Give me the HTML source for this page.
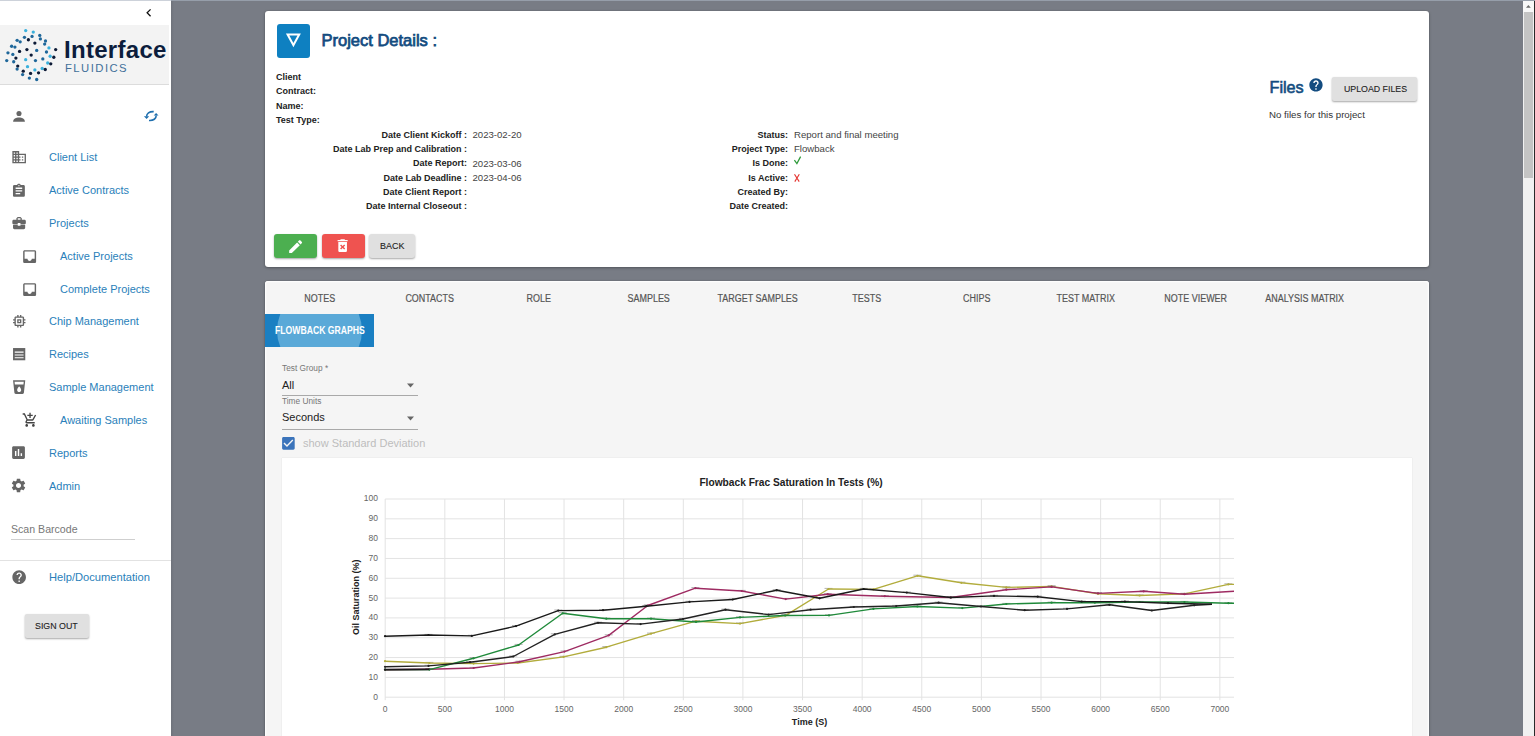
<!DOCTYPE html>
<html><head><meta charset="utf-8">
<style>
*{box-sizing:border-box;}
html,body{margin:0;padding:0;}
body{width:1535px;height:736px;overflow:hidden;position:relative;background:#787c85;font-family:"Liberation Sans",sans-serif;}
.a{position:absolute;white-space:nowrap;line-height:1;}
#side{position:absolute;left:0;top:0;width:171px;height:736px;background:#fff;}
.nav{position:absolute;font-size:11px;color:#2a7fba;line-height:1;white-space:nowrap;}
.ico{position:absolute;}
.card1{position:absolute;left:265px;top:10.8px;width:1164.2px;height:255.8px;background:#fff;border-radius:3px;box-shadow:0 1px 3px rgba(0,0,0,.3),0 0 1px rgba(0,0,0,.3);}
.card2{position:absolute;left:265px;top:281px;width:1164.2px;height:470px;background:#f5f5f5;border-radius:3px;box-shadow:inset 0 0 0 1.2px #fdfdfd,0 1px 3px rgba(0,0,0,.3),0 0 1px rgba(0,0,0,.3);}
.lbl{position:absolute;font-size:9px;font-weight:bold;color:#222;line-height:1;white-space:nowrap;}
.val{position:absolute;font-size:9.6px;color:#444;line-height:1;white-space:nowrap;}
.tab{position:absolute;font-size:10px;color:#555;-webkit-text-stroke:0.2px #555;line-height:1;white-space:nowrap;text-align:center;width:109.4px;transform:scaleX(0.895);}
</style></head><body>
<!-- top line -->
<div style="position:absolute;left:0;top:0;width:1535px;height:1px;background:#969eaa;z-index:5"></div>
<div style="position:absolute;left:0;top:0;width:171px;height:1px;background:#cdd2da;z-index:6"></div>

<div id="side">
  <!-- chevron -->
  <svg class="ico" style="left:140.8px;top:5.1px" width="15.6" height="15.6" viewBox="0 0 24 24"><path d="M15.41 7.41L14 6l-6 6 6 6 1.41-1.41L10.83 12z" fill="#111"/></svg>
  <!-- logo band -->
  <div style="position:absolute;left:0;top:25px;width:169px;height:60px;background:#f3f3f3;border-bottom:1px solid #dcdcdc"></div>
  <svg class="ico" style="left:0;top:25px" width="64" height="60"><circle cx="25.69" cy="5.58" r="1.65" fill="#3ab0dc"/><circle cx="33.27" cy="7.05" r="1.65" fill="#3ab0dc"/><circle cx="24.46" cy="12.31" r="1.65" fill="#1f679a"/><circle cx="32.05" cy="11.45" r="1.65" fill="#1f679a"/><circle cx="39.76" cy="10.47" r="1.65" fill="#1f679a"/><circle cx="40.37" cy="13.90" r="1.65" fill="#1f679a"/><circle cx="17.13" cy="15.37" r="1.65" fill="#1f679a"/><circle cx="20.18" cy="16.83" r="1.65" fill="#1f679a"/><circle cx="28.38" cy="14.76" r="1.65" fill="#0c1a36"/><circle cx="45.50" cy="15.98" r="1.65" fill="#1f679a"/><circle cx="44.65" cy="19.04" r="1.65" fill="#1f679a"/><circle cx="11.62" cy="21.24" r="1.65" fill="#1f679a"/><circle cx="14.92" cy="22.09" r="1.65" fill="#1f679a"/><circle cx="34.86" cy="18.06" r="1.65" fill="#0c1a36"/><circle cx="48.93" cy="22.95" r="1.65" fill="#3ab0dc"/><circle cx="55.66" cy="24.54" r="1.65" fill="#0c1a36"/><circle cx="26.91" cy="24.54" r="1.65" fill="#0c1a36"/><circle cx="19.57" cy="26.38" r="1.65" fill="#0c1a36"/><circle cx="36.70" cy="25.40" r="1.65" fill="#1f679a"/><circle cx="46.48" cy="26.99" r="1.65" fill="#1f679a"/><circle cx="7.95" cy="27.84" r="1.65" fill="#1f679a"/><circle cx="12.84" cy="29.43" r="1.65" fill="#1f679a"/><circle cx="31.19" cy="30.05" r="1.65" fill="#0c1a36"/><circle cx="50.15" cy="31.27" r="1.65" fill="#3ab0dc"/><circle cx="53.82" cy="32.25" r="1.65" fill="#0c1a36"/><circle cx="15.90" cy="33.10" r="1.65" fill="#0c1a36"/><circle cx="25.69" cy="34.69" r="1.65" fill="#3ab0dc"/><circle cx="35.47" cy="35.55" r="1.65" fill="#1f679a"/><circle cx="42.81" cy="33.96" r="1.65" fill="#1f679a"/><circle cx="6.73" cy="35.55" r="1.65" fill="#1f679a"/><circle cx="13.70" cy="36.77" r="1.65" fill="#1f679a"/><circle cx="47.71" cy="38.00" r="1.65" fill="#3ab0dc"/><circle cx="50.76" cy="38.85" r="1.65" fill="#0c1a36"/><circle cx="17.74" cy="41.06" r="1.65" fill="#0c1a36"/><circle cx="27.52" cy="41.67" r="1.65" fill="#3ab0dc"/><circle cx="17.13" cy="44.11" r="1.65" fill="#1f679a"/><circle cx="34.86" cy="44.97" r="1.65" fill="#3ab0dc"/><circle cx="42.20" cy="43.50" r="1.65" fill="#3ab0dc"/><circle cx="45.26" cy="44.48" r="1.65" fill="#0c1a36"/><circle cx="23.24" cy="46.19" r="1.65" fill="#0c1a36"/><circle cx="30.58" cy="48.39" r="1.65" fill="#0c1a36"/><circle cx="38.53" cy="47.78" r="1.65" fill="#0c1a36"/><circle cx="22.63" cy="49.62" r="1.65" fill="#1f679a"/><circle cx="29.36" cy="53.04" r="1.65" fill="#1f679a"/><circle cx="36.70" cy="54.51" r="1.65" fill="#1f679a"/></svg>
  <div class="a" style="left:64px;top:38.2px;font-size:24px;font-weight:bold;color:#0c1d3c;letter-spacing:0.3px">Interface</div>
  <div class="a" style="left:65px;top:63.1px;font-size:11.3px;color:#42709a;letter-spacing:1.45px">FLUIDICS</div>

  <!-- person -->
  <svg class="ico" style="left:12px;top:110px" width="14" height="13" viewBox="0 0 14 13"><circle cx="7" cy="3.5" r="2.55" fill="#666"/><path d="M1.1 11.7 C1.1 8.6 4.2 7.5 7 7.5 C9.8 7.5 12.9 8.6 12.9 11.7Z" fill="#666"/></svg>
  <!-- sync -->
  <svg class="ico" style="left:138px;top:104px" width="26" height="24" viewBox="0 0 26 24"><path d="M15.7 7.6 C11.2 7.4 8.6 9.4 8.6 12.6" stroke="#1f6fae" stroke-width="1.6" fill="none"/><path d="M5.9 12.2 L11.2 12.2 L8.6 14.9Z" fill="#1f6fae"/><path d="M11 16.5 C15.6 16.8 18.2 14.6 18.2 11.4" stroke="#1f6fae" stroke-width="1.6" fill="none"/><path d="M15.7 11.6 L20.5 11.6 L18.1 9Z" fill="#1f6fae"/></svg>

  <div class="nav" style="left:49px;top:152.19px">Client List</div>
<svg class="ico" style="left:10.74px;top:149.06px" width="16.32" height="16.32" viewBox="0 0 24 24"><path d="M12 7V3H2v18h20V7H12zM6 19H4v-2h2v2zm0-4H4v-2h2v2zm0-4H4V9h2v2zm0-4H4V5h2v2zm4 12H8v-2h2v2zm0-4H8v-2h2v2zm0-4H8V9h2v2zm0-4H8V5h2v2zm10 12h-8v-2h2v-2h-2v-2h2v-2h-2V9h8v10zm-2-8h-2v2h2v-2zm0 4h-2v2h2v-2z" fill="#666"/></svg>
<div class="nav" style="left:49px;top:185.04px">Active Contracts</div>
<svg class="ico" style="left:11.0px;top:182.80px" width="15.84" height="15.84" viewBox="0 0 24 24"><path d="M19 3h-4.18C14.4 1.84 13.3 1 12 1c-1.3 0-2.4.84-2.82 2H5c-1.1 0-2 .9-2 2v14c0 1.1.9 2 2 2h14c1.1 0 2-.9 2-2V5c0-1.1-.9-2-2-2zm-7 0c.55 0 1 .45 1 1s-.45 1-1 1-1-.45-1-1 .45-1 1-1zm2 14H7v-2h7v2zm3-4H7v-2h10v2zm0-4H7V7h10v2z" fill="#666"/></svg>
<div class="nav" style="left:49px;top:217.89px">Projects</div>
<svg class="ico" style="left:10.95px;top:215.20px" width="16.20" height="16.20" viewBox="0 0 24 24"><path d="M10 16v-1H3.01L3 19c0 1.11.89 2 2 2h14c1.11 0 2-.89 2-2v-4h-7v1h-4zm10-9h-4.01V5l-2-2h-4l-2 2v2H4c-1.1 0-2 .9-2 2v3c0 1.11.89 2 2 2h6v-2h4v2h6c1.1 0 2-.9 2-2V9c0-1.1-.9-2-2-2zm-6 0h-4V5h4v2z" fill="#666"/></svg>
<div class="nav" style="left:60px;top:250.74px">Active Projects</div>
<svg class="ico" style="left:21.14px;top:247.79px" width="17.28" height="17.28" viewBox="0 0 24 24"><path d="M19 3H4.99c-1.1 0-1.98.9-1.98 2L3 19c0 1.1.89 2 1.99 2H19c1.1 0 2-.9 2-2V5c0-1.1-.9-2-2-2zm0 12h-4c0 1.66-1.34 3-3 3s-3-1.34-3-3H4.99V5H19v10z" fill="#666"/></svg>
<div class="nav" style="left:60px;top:283.59px">Complete Projects</div>
<svg class="ico" style="left:21.14px;top:280.64px" width="17.28" height="17.28" viewBox="0 0 24 24"><path d="M19 3H4.99c-1.1 0-1.98.9-1.98 2L3 19c0 1.1.89 2 1.99 2H19c1.1 0 2-.9 2-2V5c0-1.1-.9-2-2-2zm0 12h-4c0 1.66-1.34 3-3 3s-3-1.34-3-3H4.99V5H19v10z" fill="#666"/></svg>
<div class="nav" style="left:49px;top:316.44px">Chip Management</div>
<svg class="ico" style="left:10.53px;top:313.45px" width="16.56" height="16.56" viewBox="0 0 24 24"><path d="M15 9H9v6h6V9zm-2 4h-2v-2h2v2zm8-2V9h-2V7c0-1.1-.9-2-2-2h-2V3h-2v2h-2V3H9v2H7c-1.1 0-2 .9-2 2v2H3v2h2v2H3v2h2v2c0 1.1.9 2 2 2h2v2h2v-2h2v2h2v-2h2c1.1 0 2-.9 2-2v-2h2v-2h-2v-2h2zm-4 6H7V7h10v10z" fill="#666"/></svg>
<div class="nav" style="left:49px;top:349.29px">Recipes</div>
<svg class="ico" style="left:10.9px;top:346.20px" width="16.32" height="16.32" viewBox="0 0 24 24"><rect x="3" y="3" width="18" height="18" fill="#666"/><path d="M5.5 9h13M5.5 13.2h13M5.5 17.2h13" stroke="#fff" stroke-width="1.6"/></svg>
<div class="nav" style="left:49px;top:382.14px">Sample Management</div>
<svg class="ico" style="left:10.87px;top:379.29px" width="16.32" height="16.32" viewBox="0 0 24 24"><path d="M3 2l2.01 18.23C5.13 21.23 5.97 22 7 22h10c1.03 0 1.87-.77 1.99-1.77L21 2H3zm9 17c-1.66 0-3-1.34-3-3 0-2 3-5.4 3-5.4s3 3.4 3 5.4c0 1.66-1.34 3-3 3zm6.33-11H5.67l-.44-4h13.53l-.43 4z" fill="#666"/></svg>
<div class="nav" style="left:60px;top:414.99px">Awaiting Samples</div>
<svg class="ico" style="left:21.73px;top:412.30px" width="16.08" height="16.08" viewBox="0 0 24 24"><path d="M11 9h2V6h3V4h-3V1h-2v3H8v2h3v3zm-4 9c-1.1 0-1.99.9-1.99 2S5.9 22 7 22s2-.9 2-2-.9-2-2-2zm10 0c-1.1 0-1.99.9-1.99 2s.89 2 1.99 2 2-.9 2-2-.9-2-2-2zm-9.83-3.25l.03-.12.9-1.63h7.45c.75 0 1.41-.41 1.75-1.03l3.86-7.01L19.42 4h-.01l-1.1 2-2.76 5H8.53l-.13-.27L6.16 6l-.95-2-.94-2H1v2h2l3.6 7.59-1.35 2.45c-.16.28-.25.61-.25.96 0 1.1.9 2 2 2h12v-2H7.42c-.13 0-.25-.11-.25-.25z" fill="#444"/></svg>
<div class="nav" style="left:49px;top:447.84px">Reports</div>
<svg class="ico" style="left:10.47px;top:444.35px" width="17.04" height="17.04" viewBox="0 0 24 24"><path d="M19 3H5c-1.1 0-2 .9-2 2v14c0 1.1.9 2 2 2h14c1.1 0 2-.9 2-2V5c0-1.1-.9-2-2-2zM9 17H7v-7h2v7zm4 0h-2V7h2v10zm4 0h-2v-4h2v4z" fill="#666"/></svg>
<div class="nav" style="left:49px;top:480.69px">Admin</div>
<svg class="ico" style="left:10.16px;top:477.40px" width="17.04" height="17.04" viewBox="0 0 24 24"><path d="M19.14 12.94c.04-.3.06-.61.06-.94 0-.32-.02-.64-.07-.94l2.03-1.58c.18-.14.23-.41.12-.61l-1.92-3.32c-.12-.22-.37-.29-.59-.22l-2.39.96c-.5-.38-1.030-.7-1.62-.94l-.36-2.54c-.04-.24-.24-.41-.48-.41h-3.84c-.24 0-.43.17-.47.41l-.36 2.54c-.59.24-1.13.57-1.62.94l-2.39-.96c-.22-.08-.47 0-.59.22L2.74 8.87c-.12.21-.08.47.12.61l2.03 1.58c-.05.3-.09.63-.09.94s.02.64.07.94l-2.03 1.58c-.18.14-.23.41-.12.61l1.92 3.32c.12.22.37.29.59.22l2.39-.96c.5.38 1.03.7 1.62.94l.36 2.54c.05.24.24.41.48.41h3.84c.24 0 .44-.17.47-.41l.36-2.54c.59-.24 1.13-.56 1.62-.94l2.39.96c.22.08.47 0 .59-.22l1.92-3.32c.12-.22.07-.47-.12-.61l-2.01-1.58zM12 15.6c-1.98 0-3.6-1.62-3.6-3.6s1.62-3.6 3.6-3.6 3.6 1.62 3.6 3.6-1.62 3.6-3.6 3.6z" fill="#666"/></svg>

  <div class="a" style="left:11px;top:524px;font-size:10.6px;color:#777">Scan Barcode</div>
  <div style="position:absolute;left:11px;top:539px;width:124px;height:1px;background:#cfcfcf"></div>
  <div style="position:absolute;left:0;top:560px;width:171px;height:1px;background:#e2e2e2"></div>
  <svg class="ico" style="left:10.74px;top:569.04px" width="16.32" height="16.32" viewBox="0 0 24 24"><path d="M12 2C6.48 2 2 6.48 2 12s4.48 10 10 10 10-4.48 10-10S17.52 2 12 2zm1 17h-2v-2h2v2zm2.07-7.75l-.9.92C13.45 12.9 13 13.5 13 15h-2v-.5c0-1.1.45-2.1 1.17-2.83l1.24-1.26c.37-.36.59-.86.59-1.41 0-1.1-.9-2-2-2s-2 .9-2 2H8c0-2.21 1.79-4 4-4s4 1.79 4 4c0 .88-.36 1.68-.93 2.25z" fill="#666"/></svg>
  <div class="nav" style="left:49px;top:572px;font-size:11.15px">Help/Documentation</div>
  <div style="position:absolute;left:24.7px;top:613.5px;width:64.2px;height:24.5px;background:#e0e0e0;border-radius:2px;box-shadow:0 1px 2px rgba(0,0,0,.35)"></div>
  <div class="a" style="left:35.4px;top:621px;font-size:9.9px;color:#222;-webkit-text-stroke:0.12px #222;transform:scaleX(0.895);transform-origin:0 0">SIGN OUT</div>
</div>
<!-- sidebar right edge shade -->
<div style="position:absolute;left:171px;top:1px;width:3px;height:735px;background:linear-gradient(90deg,rgba(0,0,0,.08),rgba(0,0,0,0))"></div>

<!-- CARD 1 -->
<div class="card1"></div>
<div style="position:absolute;left:276.8px;top:24px;width:33.6px;height:33.8px;background:#0e80c1;border-radius:3px"></div>
<svg class="ico" style="left:0;top:0" width="320" height="60"><path d="M285.9 33.6 L300.9 33.6 L293.4 47.2Z M289.3 35.6 L293.4 43.1 L297.5 35.6Z" fill="#fff" fill-rule="evenodd"/></svg>
<div class="a" style="left:321.5px;top:31.8px;font-size:16.5px;color:#134c80;-webkit-text-stroke:0.75px #134c80">Project Details :</div>

<div class="lbl" style="left:276px;top:72.8px">Client</div>
<div class="lbl" style="left:276px;top:87.2px">Contract:</div>
<div class="lbl" style="left:276px;top:101.6px">Name:</div>
<div class="lbl" style="left:276px;top:116px">Test Type:</div>

<div class="lbl" style="right:1068.0px;top:130.68px">Date Client Kickoff :</div>
<div class="val" style="left:472.5px;top:129.84px">2023-02-20</div>
<div class="lbl" style="right:747.0px;top:130.68px">Status:</div>
<div class="val" style="left:794px;top:129.84px">Report and final meeting</div>
<div class="lbl" style="right:1068.0px;top:145.02px">Date Lab Prep and Calibration :</div>
<div class="lbl" style="right:747.0px;top:145.02px">Project Type:</div>
<div class="val" style="left:794px;top:144.18px">Flowback</div>
<div class="lbl" style="right:1068.0px;top:159.36px">Date Report:</div>
<div class="val" style="left:472.5px;top:158.52px">2023-03-06</div>
<div class="lbl" style="right:747.0px;top:159.36px">Is Done:</div>
<svg class="ico" style="left:793px;top:155.38px" width="10" height="12" viewBox="0 0 10 12"><path d="M1.4 5.2 L3.9 8.6 L7.6 1.6" stroke="#2e9a3a" stroke-width="1.25" fill="none"/></svg>
<div class="lbl" style="right:1068.0px;top:173.70px">Date Lab Deadline :</div>
<div class="val" style="left:472.5px;top:172.86px">2023-04-06</div>
<div class="lbl" style="right:747.0px;top:173.70px">Is Active:</div>
<svg class="ico" style="left:792px;top:172.72px" width="10" height="10" viewBox="0 0 10 10"><path d="M2.5 1.3 L7.2 8.6 M7.3 1.3 L2.8 8.6" stroke="#e53935" stroke-width="1.15" fill="none"/></svg>
<div class="lbl" style="right:1068.0px;top:188.04px">Date Client Report :</div>
<div class="lbl" style="right:747.0px;top:188.04px">Created By:</div>
<div class="lbl" style="right:1068.0px;top:202.38px">Date Internal Closeout :</div>
<div class="lbl" style="right:747.0px;top:202.38px">Date Created:</div>

<div class="a" style="left:1269.5px;top:79px;font-size:16.2px;color:#134c80;-webkit-text-stroke:0.6px #134c80">Files</div>
<svg class="ico" style="left:1308.27px;top:77.12px" width="15.96" height="15.96" viewBox="0 0 24 24"><path d="M12 2C6.48 2 2 6.48 2 12s4.48 10 10 10 10-4.48 10-10S17.52 2 12 2zm1 17h-2v-2h2v2zm2.07-7.75l-.9.92C13.45 12.9 13 13.5 13 15h-2v-.5c0-1.1.45-2.1 1.17-2.83l1.24-1.26c.37-.36.59-.86.59-1.41 0-1.1-.9-2-2-2s-2 .9-2 2H8c0-2.21 1.79-4 4-4s4 1.79 4 4c0 .88-.36 1.68-.93 2.25z" fill="#134c80"/></svg>
<div style="position:absolute;left:1332px;top:77px;width:85px;height:24px;background:#e0e0e0;border-radius:2px;box-shadow:0 1px 2px rgba(0,0,0,.35)"></div>
<div class="a" style="left:1343.5px;top:84.4px;font-size:9.8px;color:#222;-webkit-text-stroke:0.12px #222;transform:scaleX(0.897);transform-origin:0 0">UPLOAD FILES</div>
<div class="a" style="left:1269px;top:110px;font-size:9.7px;color:#333">No files for this project</div>

<!-- buttons -->
<div style="position:absolute;left:274px;top:234px;width:43px;height:24px;background:#4caf50;border-radius:3px;box-shadow:0 1px 2px rgba(0,0,0,.35)"></div>
<svg class="ico" style="left:286.84px;top:237.84px" width="17.28" height="17.28" viewBox="0 0 24 24"><path d="M3 17.25V21h3.75L17.81 9.94l-3.75-3.75L3 17.25zM20.71 7.04c.39-.39.39-1.02 0-1.41l-2.34-2.34c-.39-.39-1.02-.39-1.41 0l-1.830 1.83 3.75 3.75 1.83-1.83z" fill="#fff"/></svg>
<div style="position:absolute;left:322px;top:234px;width:43px;height:24px;background:#ef5350;border-radius:3px;box-shadow:0 1px 2px rgba(0,0,0,.35)"></div>
<svg class="ico" style="left:334.4px;top:237.44px" width="17.28" height="17.28" viewBox="0 0 24 24"><path d="M6 19c0 1.1.9 2 2 2h8c1.1 0 2-.9 2-2V7H6v12zm2.46-7.12l1.41-1.41L12 12.59l2.12-2.120 1.41 1.41L13.41 14l2.12 2.12-1.41 1.41L12 15.41l-2.12 2.12-1.41-1.41L10.59 14l-2.13-2.12zM15.5 4l-1-1h-5l-1 1H5v2h14V4z" fill="#fff"/></svg>
<div style="position:absolute;left:369px;top:234px;width:46px;height:24px;background:#e0e0e0;border-radius:3px;box-shadow:0 1px 2px rgba(0,0,0,.35)"></div>
<div class="a" style="left:379.7px;top:241.3px;font-size:9.4px;color:#222;-webkit-text-stroke:0.12px #222;transform:scaleX(0.955);transform-origin:0 0">BACK</div>

<!-- CARD 2 -->
<div class="card2"></div>
<div class="tab" style="left:265.30px;top:293.64px">NOTES</div>
<div class="tab" style="left:374.70px;top:293.64px">CONTACTS</div>
<div class="tab" style="left:484.10px;top:293.64px">ROLE</div>
<div class="tab" style="left:593.50px;top:293.64px">SAMPLES</div>
<div class="tab" style="left:702.90px;top:293.64px">TARGET SAMPLES</div>
<div class="tab" style="left:812.30px;top:293.64px">TESTS</div>
<div class="tab" style="left:921.70px;top:293.64px">CHIPS</div>
<div class="tab" style="left:1031.10px;top:293.64px">TEST MATRIX</div>
<div class="tab" style="left:1140.50px;top:293.64px">NOTE VIEWER</div>
<div class="tab" style="left:1249.90px;top:293.64px">ANALYSIS MATRIX</div>
<div style="position:absolute;left:265px;top:314px;width:109.4px;height:32.5px;background:#1a7fc2;overflow:hidden">
  <div style="position:absolute;left:12px;top:-26px;width:85px;height:85px;border-radius:50%;background:#5aa9d8"></div>
</div>
<div class="a" style="left:275px;top:326px;font-size:10px;font-weight:bold;color:#fff;transform:scaleX(0.865);transform-origin:0 0">FLOWBACK GRAPHS</div>

<div class="a" style="left:282px;top:364.3px;font-size:8.3px;color:#777">Test Group *</div>
<div class="a" style="left:282px;top:380px;font-size:11px;color:#222">All</div>
<svg class="ico" style="left:406px;top:383px" width="9" height="5" viewBox="0 0 9 5"><path d="M1 0.5 H8 L4.5 4.5Z" fill="#666"/></svg>
<div style="position:absolute;left:282px;top:395px;width:136px;height:1px;background:#a9a9a9"></div>
<div class="a" style="left:282px;top:397.3px;font-size:8.3px;color:#777">Time Units</div>
<div class="a" style="left:282px;top:412.4px;font-size:11px;color:#222">Seconds</div>
<svg class="ico" style="left:406px;top:416px" width="9" height="5" viewBox="0 0 9 5"><path d="M1 0.5 H8 L4.5 4.5Z" fill="#666"/></svg>
<div style="position:absolute;left:282px;top:429px;width:136px;height:1px;background:#a9a9a9"></div>
<svg class="ico" style="left:280.4px;top:435.1px" width="16.8" height="16.8" viewBox="0 0 24 24"><path d="M19 3H5c-1.11 0-2 .9-2 2v14c0 1.1.89 2 2 2h14c1.11 0 2-.9 2-2V5c0-1.1-.89-2-2-2zm-9 14l-5-5 1.41-1.41L10 14.17l7.590-7.59L19 8l-9 9z" fill="#3b74bb"/></svg>
<div class="a" style="left:303px;top:438px;font-size:11px;color:#bdbdbd">show Standard Deviation</div>

<!-- chart -->
<div style="position:absolute;left:282px;top:458px;width:1130px;height:300px;background:#fff;box-shadow:0 0 1px rgba(0,0,0,.15)"></div>
<svg style="position:absolute;left:0;top:0" width="1535" height="736"><line x1="385.2" y1="697.20" x2="1234" y2="697.20" stroke="#e3e3e3" stroke-width="1"/><text x="378" y="699.60" text-anchor="end" font-size="8.5" fill="#666" font-family="Liberation Sans">0</text><line x1="385.2" y1="677.38" x2="1234" y2="677.38" stroke="#e3e3e3" stroke-width="1"/><text x="378" y="679.78" text-anchor="end" font-size="8.5" fill="#666" font-family="Liberation Sans">10</text><line x1="385.2" y1="657.56" x2="1234" y2="657.56" stroke="#e3e3e3" stroke-width="1"/><text x="378" y="659.96" text-anchor="end" font-size="8.5" fill="#666" font-family="Liberation Sans">20</text><line x1="385.2" y1="637.74" x2="1234" y2="637.74" stroke="#e3e3e3" stroke-width="1"/><text x="378" y="640.14" text-anchor="end" font-size="8.5" fill="#666" font-family="Liberation Sans">30</text><line x1="385.2" y1="617.92" x2="1234" y2="617.92" stroke="#e3e3e3" stroke-width="1"/><text x="378" y="620.32" text-anchor="end" font-size="8.5" fill="#666" font-family="Liberation Sans">40</text><line x1="385.2" y1="598.10" x2="1234" y2="598.10" stroke="#e3e3e3" stroke-width="1"/><text x="378" y="600.50" text-anchor="end" font-size="8.5" fill="#666" font-family="Liberation Sans">50</text><line x1="385.2" y1="578.28" x2="1234" y2="578.28" stroke="#e3e3e3" stroke-width="1"/><text x="378" y="580.68" text-anchor="end" font-size="8.5" fill="#666" font-family="Liberation Sans">60</text><line x1="385.2" y1="558.46" x2="1234" y2="558.46" stroke="#e3e3e3" stroke-width="1"/><text x="378" y="560.86" text-anchor="end" font-size="8.5" fill="#666" font-family="Liberation Sans">70</text><line x1="385.2" y1="538.64" x2="1234" y2="538.64" stroke="#e3e3e3" stroke-width="1"/><text x="378" y="541.04" text-anchor="end" font-size="8.5" fill="#666" font-family="Liberation Sans">80</text><line x1="385.2" y1="518.82" x2="1234" y2="518.82" stroke="#e3e3e3" stroke-width="1"/><text x="378" y="521.22" text-anchor="end" font-size="8.5" fill="#666" font-family="Liberation Sans">90</text><line x1="385.2" y1="499.00" x2="1234" y2="499.00" stroke="#e3e3e3" stroke-width="1"/><text x="378" y="501.40" text-anchor="end" font-size="8.5" fill="#666" font-family="Liberation Sans">100</text><line x1="385.20" y1="499.00" x2="385.20" y2="700.20" stroke="#e3e3e3" stroke-width="1"/><text x="385.20" y="712.3" text-anchor="middle" font-size="8.5" fill="#666" font-family="Liberation Sans">0</text><line x1="444.82" y1="499.00" x2="444.82" y2="700.20" stroke="#e3e3e3" stroke-width="1"/><text x="444.82" y="712.3" text-anchor="middle" font-size="8.5" fill="#666" font-family="Liberation Sans">500</text><line x1="504.44" y1="499.00" x2="504.44" y2="700.20" stroke="#e3e3e3" stroke-width="1"/><text x="504.44" y="712.3" text-anchor="middle" font-size="8.5" fill="#666" font-family="Liberation Sans">1000</text><line x1="564.06" y1="499.00" x2="564.06" y2="700.20" stroke="#e3e3e3" stroke-width="1"/><text x="564.06" y="712.3" text-anchor="middle" font-size="8.5" fill="#666" font-family="Liberation Sans">1500</text><line x1="623.68" y1="499.00" x2="623.68" y2="700.20" stroke="#e3e3e3" stroke-width="1"/><text x="623.68" y="712.3" text-anchor="middle" font-size="8.5" fill="#666" font-family="Liberation Sans">2000</text><line x1="683.30" y1="499.00" x2="683.30" y2="700.20" stroke="#e3e3e3" stroke-width="1"/><text x="683.30" y="712.3" text-anchor="middle" font-size="8.5" fill="#666" font-family="Liberation Sans">2500</text><line x1="742.92" y1="499.00" x2="742.92" y2="700.20" stroke="#e3e3e3" stroke-width="1"/><text x="742.92" y="712.3" text-anchor="middle" font-size="8.5" fill="#666" font-family="Liberation Sans">3000</text><line x1="802.54" y1="499.00" x2="802.54" y2="700.20" stroke="#e3e3e3" stroke-width="1"/><text x="802.54" y="712.3" text-anchor="middle" font-size="8.5" fill="#666" font-family="Liberation Sans">3500</text><line x1="862.16" y1="499.00" x2="862.16" y2="700.20" stroke="#e3e3e3" stroke-width="1"/><text x="862.16" y="712.3" text-anchor="middle" font-size="8.5" fill="#666" font-family="Liberation Sans">4000</text><line x1="921.78" y1="499.00" x2="921.78" y2="700.20" stroke="#e3e3e3" stroke-width="1"/><text x="921.78" y="712.3" text-anchor="middle" font-size="8.5" fill="#666" font-family="Liberation Sans">4500</text><line x1="981.40" y1="499.00" x2="981.40" y2="700.20" stroke="#e3e3e3" stroke-width="1"/><text x="981.40" y="712.3" text-anchor="middle" font-size="8.5" fill="#666" font-family="Liberation Sans">5000</text><line x1="1041.02" y1="499.00" x2="1041.02" y2="700.20" stroke="#e3e3e3" stroke-width="1"/><text x="1041.02" y="712.3" text-anchor="middle" font-size="8.5" fill="#666" font-family="Liberation Sans">5500</text><line x1="1100.64" y1="499.00" x2="1100.64" y2="700.20" stroke="#e3e3e3" stroke-width="1"/><text x="1100.64" y="712.3" text-anchor="middle" font-size="8.5" fill="#666" font-family="Liberation Sans">6000</text><line x1="1160.26" y1="499.00" x2="1160.26" y2="700.20" stroke="#e3e3e3" stroke-width="1"/><text x="1160.26" y="712.3" text-anchor="middle" font-size="8.5" fill="#666" font-family="Liberation Sans">6500</text><line x1="1219.88" y1="499.00" x2="1219.88" y2="700.20" stroke="#e3e3e3" stroke-width="1"/><text x="1219.88" y="712.3" text-anchor="middle" font-size="8.5" fill="#666" font-family="Liberation Sans">7000</text><text x="791" y="485.5" text-anchor="middle" font-size="10.2" font-weight="bold" fill="#222" font-family="Liberation Sans">Flowback Frac Saturation In Tests (%)</text><text x="809.5" y="725.3" text-anchor="middle" font-size="9" font-weight="bold" fill="#222" font-family="Liberation Sans">Time (S)</text><text transform="translate(358.6,597.3) rotate(-90)" text-anchor="middle" font-size="9" font-weight="bold" fill="#222" font-family="Liberation Sans">Oil Saturation (%)</text><path d="M425.4 662.4h8" stroke="#555" stroke-opacity="0.45" stroke-width="1"/><path d="M469.6 663.0h8" stroke="#555" stroke-opacity="0.45" stroke-width="1"/><path d="M513.7 662.4h8" stroke="#555" stroke-opacity="0.45" stroke-width="1"/><path d="M559.6 656.3h8" stroke="#555" stroke-opacity="0.45" stroke-width="1"/><path d="M602.3 646.6h8" stroke="#555" stroke-opacity="0.45" stroke-width="1"/><path d="M647.0 633.1h8" stroke="#555" stroke-opacity="0.45" stroke-width="1"/><path d="M692.0 620.6h8" stroke="#555" stroke-opacity="0.45" stroke-width="1"/><path d="M736.0 623.0h8" stroke="#555" stroke-opacity="0.45" stroke-width="1"/><path d="M781.7 614.8h8" stroke="#555" stroke-opacity="0.45" stroke-width="1"/><path d="M824.5 588.4h8" stroke="#555" stroke-opacity="0.45" stroke-width="1"/><path d="M869.4 588.8h8" stroke="#555" stroke-opacity="0.45" stroke-width="1"/><path d="M913.4 575.2h8" stroke="#555" stroke-opacity="0.45" stroke-width="1"/><path d="M957.4 582.2h8" stroke="#555" stroke-opacity="0.45" stroke-width="1"/><path d="M1002.3 586.8h8" stroke="#555" stroke-opacity="0.45" stroke-width="1"/><path d="M1047.6 585.8h8" stroke="#555" stroke-opacity="0.45" stroke-width="1"/><path d="M1094.0 593.1h8" stroke="#555" stroke-opacity="0.45" stroke-width="1"/><path d="M1135.6 594.9h8" stroke="#555" stroke-opacity="0.45" stroke-width="1"/><path d="M1180.4 593.3h8" stroke="#555" stroke-opacity="0.45" stroke-width="1"/><path d="M1224.4 583.8h8" stroke="#555" stroke-opacity="0.45" stroke-width="1"/><polyline points="385.0,661.2 429.4,663.0 473.6,663.6 517.7,663.0 563.6,656.9 606.3,647.2 651.0,633.7 696.0,621.2 740.0,623.6 785.7,615.4 828.5,589.0 873.4,589.4 917.4,575.8 961.4,582.8 1006.3,587.4 1051.6,586.4 1098.0,593.7 1139.6,595.5 1184.4,593.9 1228.4,584.4 1234.0,584.4" fill="none" stroke="#b2ac3c" stroke-width="1.4" stroke-linejoin="round"/><circle cx="385.0" cy="661.2" r="1.1" fill="#b2ac3c"/><circle cx="429.4" cy="663.0" r="1.1" fill="#b2ac3c"/><circle cx="473.6" cy="663.6" r="1.1" fill="#b2ac3c"/><circle cx="517.7" cy="663.0" r="1.1" fill="#b2ac3c"/><circle cx="563.6" cy="656.9" r="1.1" fill="#b2ac3c"/><circle cx="606.3" cy="647.2" r="1.1" fill="#b2ac3c"/><circle cx="651.0" cy="633.7" r="1.1" fill="#b2ac3c"/><circle cx="696.0" cy="621.2" r="1.1" fill="#b2ac3c"/><circle cx="740.0" cy="623.6" r="1.1" fill="#b2ac3c"/><circle cx="785.7" cy="615.4" r="1.1" fill="#b2ac3c"/><circle cx="828.5" cy="589.0" r="1.1" fill="#b2ac3c"/><circle cx="873.4" cy="589.4" r="1.1" fill="#b2ac3c"/><circle cx="917.4" cy="575.8" r="1.1" fill="#b2ac3c"/><circle cx="961.4" cy="582.8" r="1.1" fill="#b2ac3c"/><circle cx="1006.3" cy="587.4" r="1.1" fill="#b2ac3c"/><circle cx="1051.6" cy="586.4" r="1.1" fill="#b2ac3c"/><circle cx="1098.0" cy="593.7" r="1.1" fill="#b2ac3c"/><circle cx="1139.6" cy="595.5" r="1.1" fill="#b2ac3c"/><circle cx="1184.4" cy="593.9" r="1.1" fill="#b2ac3c"/><circle cx="1228.4" cy="584.4" r="1.1" fill="#b2ac3c"/><path d="M425.4 668.6h8" stroke="#555" stroke-opacity="0.45" stroke-width="1"/><path d="M469.6 667.4h8" stroke="#555" stroke-opacity="0.45" stroke-width="1"/><path d="M515.5 661.2h8" stroke="#555" stroke-opacity="0.45" stroke-width="1"/><path d="M560.5 651.0h8" stroke="#555" stroke-opacity="0.45" stroke-width="1"/><path d="M604.7 634.8h8" stroke="#555" stroke-opacity="0.45" stroke-width="1"/><path d="M643.8 604.9h8" stroke="#555" stroke-opacity="0.45" stroke-width="1"/><path d="M691.4 587.6h8" stroke="#555" stroke-opacity="0.45" stroke-width="1"/><path d="M737.7 590.4h8" stroke="#555" stroke-opacity="0.45" stroke-width="1"/><path d="M781.7 598.5h8" stroke="#555" stroke-opacity="0.45" stroke-width="1"/><path d="M823.7 593.6h8" stroke="#555" stroke-opacity="0.45" stroke-width="1"/><path d="M880.8 595.6h8" stroke="#555" stroke-opacity="0.45" stroke-width="1"/><path d="M946.8 596.9h8" stroke="#555" stroke-opacity="0.45" stroke-width="1"/><path d="M1002.3 589.1h8" stroke="#555" stroke-opacity="0.45" stroke-width="1"/><path d="M1047.6 586.3h8" stroke="#555" stroke-opacity="0.45" stroke-width="1"/><path d="M1094.0 592.8h8" stroke="#555" stroke-opacity="0.45" stroke-width="1"/><path d="M1139.7 590.7h8" stroke="#555" stroke-opacity="0.45" stroke-width="1"/><path d="M1180.4 593.6h8" stroke="#555" stroke-opacity="0.45" stroke-width="1"/><polyline points="385.0,669.8 429.4,669.2 473.6,668.0 519.5,661.8 564.5,651.6 608.7,635.4 647.8,605.5 695.4,588.2 741.7,591.0 785.7,599.1 827.7,594.2 884.8,596.2 950.8,597.5 1006.3,589.7 1051.6,586.9 1098.0,593.4 1143.7,591.3 1184.4,594.2 1234.0,591.3" fill="none" stroke="#9e2b62" stroke-width="1.4" stroke-linejoin="round"/><circle cx="385.0" cy="669.8" r="1.1" fill="#9e2b62"/><circle cx="429.4" cy="669.2" r="1.1" fill="#9e2b62"/><circle cx="473.6" cy="668.0" r="1.1" fill="#9e2b62"/><circle cx="519.5" cy="661.8" r="1.1" fill="#9e2b62"/><circle cx="564.5" cy="651.6" r="1.1" fill="#9e2b62"/><circle cx="608.7" cy="635.4" r="1.1" fill="#9e2b62"/><circle cx="647.8" cy="605.5" r="1.1" fill="#9e2b62"/><circle cx="695.4" cy="588.2" r="1.1" fill="#9e2b62"/><circle cx="741.7" cy="591.0" r="1.1" fill="#9e2b62"/><circle cx="785.7" cy="599.1" r="1.1" fill="#9e2b62"/><circle cx="827.7" cy="594.2" r="1.1" fill="#9e2b62"/><circle cx="884.8" cy="596.2" r="1.1" fill="#9e2b62"/><circle cx="950.8" cy="597.5" r="1.1" fill="#9e2b62"/><circle cx="1006.3" cy="589.7" r="1.1" fill="#9e2b62"/><circle cx="1051.6" cy="586.9" r="1.1" fill="#9e2b62"/><circle cx="1098.0" cy="593.4" r="1.1" fill="#9e2b62"/><circle cx="1143.7" cy="591.3" r="1.1" fill="#9e2b62"/><circle cx="1184.4" cy="594.2" r="1.1" fill="#9e2b62"/><path d="M425.4 669.0h8" stroke="#555" stroke-opacity="0.45" stroke-width="1"/><path d="M469.6 657.7h8" stroke="#555" stroke-opacity="0.45" stroke-width="1"/><path d="M514.6 644.4h8" stroke="#555" stroke-opacity="0.45" stroke-width="1"/><path d="M558.7 612.7h8" stroke="#555" stroke-opacity="0.45" stroke-width="1"/><path d="M602.3 618.1h8" stroke="#555" stroke-opacity="0.45" stroke-width="1"/><path d="M647.0 618.1h8" stroke="#555" stroke-opacity="0.45" stroke-width="1"/><path d="M692.0 621.4h8" stroke="#555" stroke-opacity="0.45" stroke-width="1"/><path d="M736.0 616.8h8" stroke="#555" stroke-opacity="0.45" stroke-width="1"/><path d="M781.0 614.9h8" stroke="#555" stroke-opacity="0.45" stroke-width="1"/><path d="M825.0 614.8h8" stroke="#555" stroke-opacity="0.45" stroke-width="1"/><path d="M869.4 608.3h8" stroke="#555" stroke-opacity="0.45" stroke-width="1"/><path d="M913.4 605.9h8" stroke="#555" stroke-opacity="0.45" stroke-width="1"/><path d="M958.3 607.5h8" stroke="#555" stroke-opacity="0.45" stroke-width="1"/><path d="M1002.3 603.4h8" stroke="#555" stroke-opacity="0.45" stroke-width="1"/><path d="M1047.6 602.1h8" stroke="#555" stroke-opacity="0.45" stroke-width="1"/><path d="M1090.8 602.1h8" stroke="#555" stroke-opacity="0.45" stroke-width="1"/><path d="M1135.6 601.4h8" stroke="#555" stroke-opacity="0.45" stroke-width="1"/><path d="M1180.4 601.4h8" stroke="#555" stroke-opacity="0.45" stroke-width="1"/><path d="M1224.4 602.6h8" stroke="#555" stroke-opacity="0.45" stroke-width="1"/><polyline points="385.0,669.6 429.4,669.6 473.6,658.3 518.6,645.0 562.7,613.3 606.3,618.7 651.0,618.7 696.0,622.0 740.0,617.4 785.0,615.5 829.0,615.4 873.4,608.9 917.4,606.5 962.3,608.1 1006.3,604.0 1051.6,602.7 1094.8,602.7 1139.6,602.0 1184.4,602.0 1228.4,603.2 1234.0,603.2" fill="none" stroke="#1f8a3a" stroke-width="1.4" stroke-linejoin="round"/><circle cx="385.0" cy="669.6" r="1.1" fill="#1f8a3a"/><circle cx="429.4" cy="669.6" r="1.1" fill="#1f8a3a"/><circle cx="473.6" cy="658.3" r="1.1" fill="#1f8a3a"/><circle cx="518.6" cy="645.0" r="1.1" fill="#1f8a3a"/><circle cx="562.7" cy="613.3" r="1.1" fill="#1f8a3a"/><circle cx="606.3" cy="618.7" r="1.1" fill="#1f8a3a"/><circle cx="651.0" cy="618.7" r="1.1" fill="#1f8a3a"/><circle cx="696.0" cy="622.0" r="1.1" fill="#1f8a3a"/><circle cx="740.0" cy="617.4" r="1.1" fill="#1f8a3a"/><circle cx="785.0" cy="615.5" r="1.1" fill="#1f8a3a"/><circle cx="829.0" cy="615.4" r="1.1" fill="#1f8a3a"/><circle cx="873.4" cy="608.9" r="1.1" fill="#1f8a3a"/><circle cx="917.4" cy="606.5" r="1.1" fill="#1f8a3a"/><circle cx="962.3" cy="608.1" r="1.1" fill="#1f8a3a"/><circle cx="1006.3" cy="604.0" r="1.1" fill="#1f8a3a"/><circle cx="1051.6" cy="602.7" r="1.1" fill="#1f8a3a"/><circle cx="1094.8" cy="602.7" r="1.1" fill="#1f8a3a"/><circle cx="1139.6" cy="602.0" r="1.1" fill="#1f8a3a"/><circle cx="1184.4" cy="602.0" r="1.1" fill="#1f8a3a"/><circle cx="1228.4" cy="603.2" r="1.1" fill="#1f8a3a"/><path d="M424.5 665.3h8" stroke="#555" stroke-opacity="0.45" stroke-width="1"/><path d="M466.0 661.6h8" stroke="#555" stroke-opacity="0.45" stroke-width="1"/><path d="M509.3 655.9h8" stroke="#555" stroke-opacity="0.45" stroke-width="1"/><path d="M550.8 633.8h8" stroke="#555" stroke-opacity="0.45" stroke-width="1"/><path d="M594.0 622.2h8" stroke="#555" stroke-opacity="0.45" stroke-width="1"/><path d="M636.6 623.5h8" stroke="#555" stroke-opacity="0.45" stroke-width="1"/><path d="M679.0 618.4h8" stroke="#555" stroke-opacity="0.45" stroke-width="1"/><path d="M721.4 609.1h8" stroke="#555" stroke-opacity="0.45" stroke-width="1"/><path d="M764.6 614.0h8" stroke="#555" stroke-opacity="0.45" stroke-width="1"/><path d="M806.6 609.1h8" stroke="#555" stroke-opacity="0.45" stroke-width="1"/><path d="M849.8 606.4h8" stroke="#555" stroke-opacity="0.45" stroke-width="1"/><path d="M892.2 605.4h8" stroke="#555" stroke-opacity="0.45" stroke-width="1"/><path d="M934.6 602.1h8" stroke="#555" stroke-opacity="0.45" stroke-width="1"/><path d="M977.0 605.9h8" stroke="#555" stroke-opacity="0.45" stroke-width="1"/><path d="M1020.7 609.6h8" stroke="#555" stroke-opacity="0.45" stroke-width="1"/><path d="M1063.0 608.3h8" stroke="#555" stroke-opacity="0.45" stroke-width="1"/><path d="M1105.4 604.2h8" stroke="#555" stroke-opacity="0.45" stroke-width="1"/><path d="M1147.8 609.9h8" stroke="#555" stroke-opacity="0.45" stroke-width="1"/><path d="M1190.2 604.7h8" stroke="#555" stroke-opacity="0.45" stroke-width="1"/><polyline points="385.0,666.8 428.5,665.9 470.0,662.2 513.3,656.5 554.8,634.4 598.0,622.8 640.6,624.1 683.0,619.0 725.4,609.7 768.6,614.6 810.6,609.7 853.8,607.0 896.2,606.0 938.6,602.7 981.0,606.5 1024.7,610.2 1067.0,608.9 1109.4,604.8 1151.8,610.5 1194.2,605.3 1212.0,604.3" fill="none" stroke="#222" stroke-width="1.4" stroke-linejoin="round"/><circle cx="385.0" cy="666.8" r="1.1" fill="#222"/><circle cx="428.5" cy="665.9" r="1.1" fill="#222"/><circle cx="470.0" cy="662.2" r="1.1" fill="#222"/><circle cx="513.3" cy="656.5" r="1.1" fill="#222"/><circle cx="554.8" cy="634.4" r="1.1" fill="#222"/><circle cx="598.0" cy="622.8" r="1.1" fill="#222"/><circle cx="640.6" cy="624.1" r="1.1" fill="#222"/><circle cx="683.0" cy="619.0" r="1.1" fill="#222"/><circle cx="725.4" cy="609.7" r="1.1" fill="#222"/><circle cx="768.6" cy="614.6" r="1.1" fill="#222"/><circle cx="810.6" cy="609.7" r="1.1" fill="#222"/><circle cx="853.8" cy="607.0" r="1.1" fill="#222"/><circle cx="896.2" cy="606.0" r="1.1" fill="#222"/><circle cx="938.6" cy="602.7" r="1.1" fill="#222"/><circle cx="981.0" cy="606.5" r="1.1" fill="#222"/><circle cx="1024.7" cy="610.2" r="1.1" fill="#222"/><circle cx="1067.0" cy="608.9" r="1.1" fill="#222"/><circle cx="1109.4" cy="604.8" r="1.1" fill="#222"/><circle cx="1151.8" cy="610.5" r="1.1" fill="#222"/><circle cx="1194.2" cy="605.3" r="1.1" fill="#222"/><path d="M424.5 634.4h8" stroke="#555" stroke-opacity="0.45" stroke-width="1"/><path d="M467.8 635.3h8" stroke="#555" stroke-opacity="0.45" stroke-width="1"/><path d="M512.0 625.5h8" stroke="#555" stroke-opacity="0.45" stroke-width="1"/><path d="M554.3 610.0h8" stroke="#555" stroke-opacity="0.45" stroke-width="1"/><path d="M599.0 609.6h8" stroke="#555" stroke-opacity="0.45" stroke-width="1"/><path d="M642.3 605.6h8" stroke="#555" stroke-opacity="0.45" stroke-width="1"/><path d="M685.5 601.3h8" stroke="#555" stroke-opacity="0.45" stroke-width="1"/><path d="M728.7 598.9h8" stroke="#555" stroke-opacity="0.45" stroke-width="1"/><path d="M772.7 589.6h8" stroke="#555" stroke-opacity="0.45" stroke-width="1"/><path d="M815.6 597.7h8" stroke="#555" stroke-opacity="0.45" stroke-width="1"/><path d="M859.6 588.4h8" stroke="#555" stroke-opacity="0.45" stroke-width="1"/><path d="M902.8 592.0h8" stroke="#555" stroke-opacity="0.45" stroke-width="1"/><path d="M946.8 596.9h8" stroke="#555" stroke-opacity="0.45" stroke-width="1"/><path d="M990.0 595.3h8" stroke="#555" stroke-opacity="0.45" stroke-width="1"/><path d="M1033.7 596.1h8" stroke="#555" stroke-opacity="0.45" stroke-width="1"/><path d="M1077.7 601.0h8" stroke="#555" stroke-opacity="0.45" stroke-width="1"/><path d="M1120.9 601.0h8" stroke="#555" stroke-opacity="0.45" stroke-width="1"/><path d="M1164.0 602.6h8" stroke="#555" stroke-opacity="0.45" stroke-width="1"/><polyline points="385.0,636.2 428.5,635.0 471.8,635.9 516.0,626.1 558.3,610.6 603.0,610.2 646.3,606.2 689.5,601.9 732.7,599.5 776.7,590.2 819.6,598.3 863.6,589.0 906.8,592.6 950.8,597.5 994.0,595.9 1037.7,596.7 1081.7,601.6 1124.9,601.6 1168.0,603.2 1212.0,604.3" fill="none" stroke="#1a1a1a" stroke-width="1.4" stroke-linejoin="round"/><circle cx="385.0" cy="636.2" r="1.1" fill="#1a1a1a"/><circle cx="428.5" cy="635.0" r="1.1" fill="#1a1a1a"/><circle cx="471.8" cy="635.9" r="1.1" fill="#1a1a1a"/><circle cx="516.0" cy="626.1" r="1.1" fill="#1a1a1a"/><circle cx="558.3" cy="610.6" r="1.1" fill="#1a1a1a"/><circle cx="603.0" cy="610.2" r="1.1" fill="#1a1a1a"/><circle cx="646.3" cy="606.2" r="1.1" fill="#1a1a1a"/><circle cx="689.5" cy="601.9" r="1.1" fill="#1a1a1a"/><circle cx="732.7" cy="599.5" r="1.1" fill="#1a1a1a"/><circle cx="776.7" cy="590.2" r="1.1" fill="#1a1a1a"/><circle cx="819.6" cy="598.3" r="1.1" fill="#1a1a1a"/><circle cx="863.6" cy="589.0" r="1.1" fill="#1a1a1a"/><circle cx="906.8" cy="592.6" r="1.1" fill="#1a1a1a"/><circle cx="950.8" cy="597.5" r="1.1" fill="#1a1a1a"/><circle cx="994.0" cy="595.9" r="1.1" fill="#1a1a1a"/><circle cx="1037.7" cy="596.7" r="1.1" fill="#1a1a1a"/><circle cx="1081.7" cy="601.6" r="1.1" fill="#1a1a1a"/><circle cx="1124.9" cy="601.6" r="1.1" fill="#1a1a1a"/><circle cx="1168.0" cy="603.2" r="1.1" fill="#1a1a1a"/><polyline points="385.0,669.6 429.4,669.3" fill="none" stroke="#1a1a1a" stroke-width="1.8" stroke-linejoin="round"/><circle cx="385.0" cy="669.6" r="1.1" fill="#1a1a1a"/></svg>

<!-- scrollbar -->
<div style="position:absolute;left:1522.8px;top:1px;width:11.2px;height:735px;background:#f1f1f1"></div>
<div style="position:absolute;left:1522.8px;top:1px;width:11.2px;height:11px;background:#f8f8f8"></div>
<div style="position:absolute;left:1524.1px;top:12px;width:9.3px;height:166px;background:#c4c4c4"></div>
<div style="position:absolute;left:1534px;top:0;width:1px;height:736px;background:#2a2a2a"></div>
<svg class="ico" style="left:1523px;top:2px" width="11" height="8" viewBox="0 0 11 8"><path d="M3 5.8 L5.4 3.1 L7.8 5.8Z" fill="#6a6a6a"/></svg>
</body></html>
